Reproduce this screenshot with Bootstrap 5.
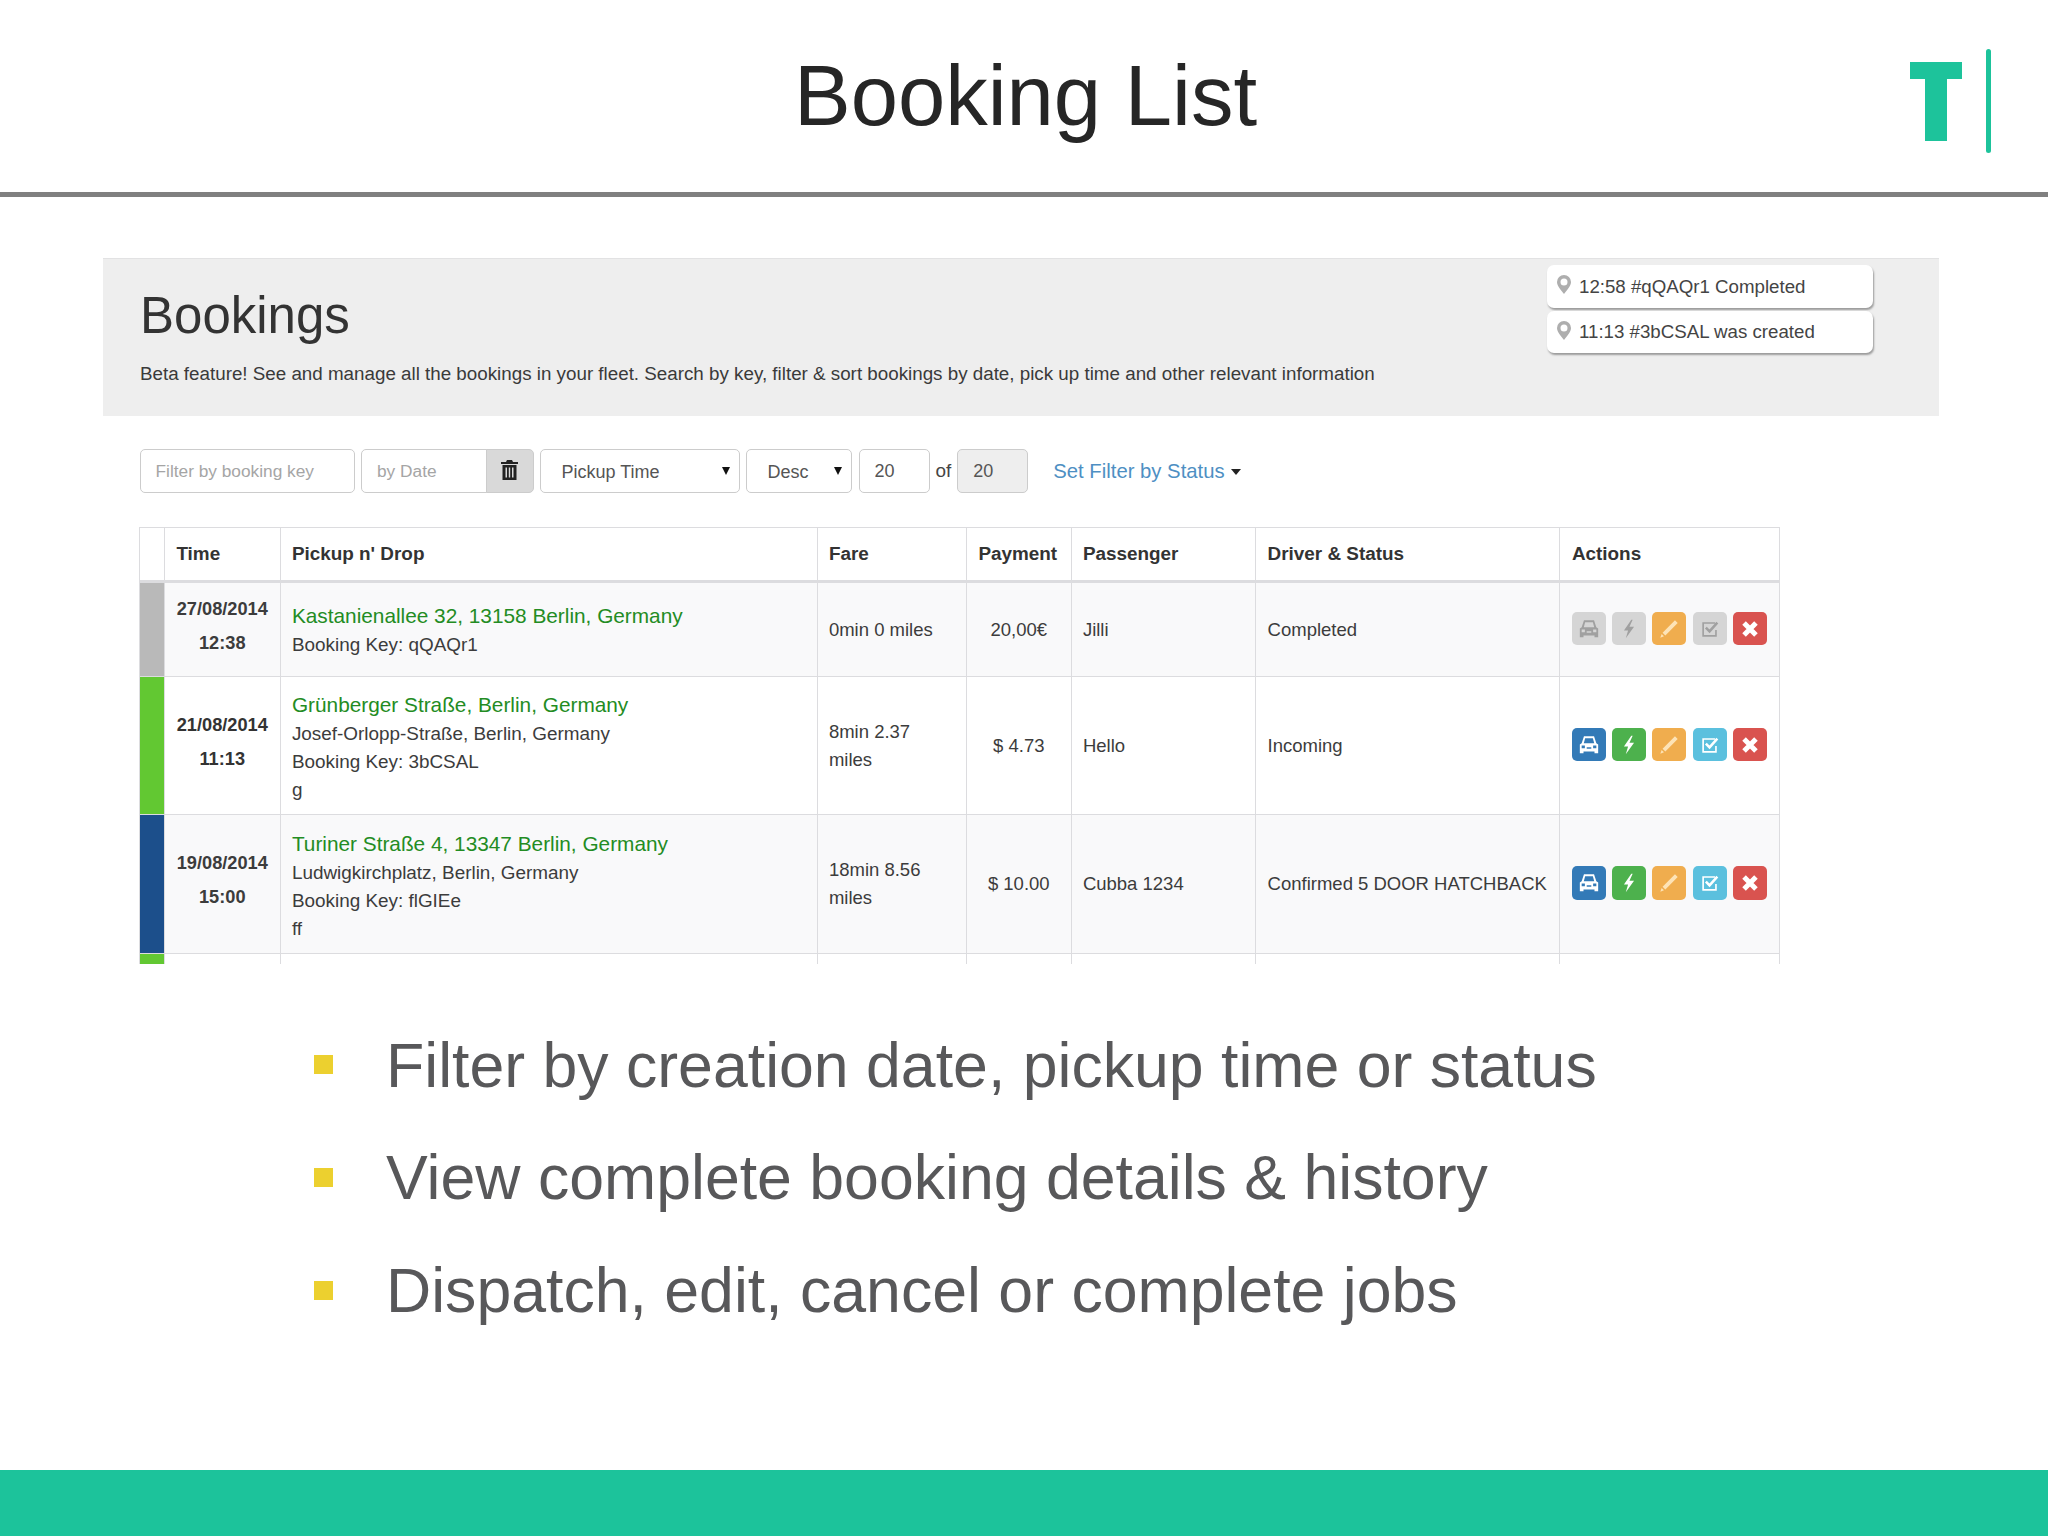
<!DOCTYPE html>
<html lang="en">
<head>
<meta charset="utf-8">
<title>Booking List</title>
<link href="https://cdn.jsdelivr.net/npm/bootstrap@5.3.0/dist/css/bootstrap.min.css" rel="stylesheet">
<style>
html,body{margin:0;background:#fff}
body{font-family:"Liberation Sans",Arial,sans-serif;color:#333}
.slide{width:2048px;height:1536px;display:flex;flex-direction:column;overflow:hidden;background:#fff}
.slide-head{height:192px;display:grid;grid-template-columns:1fr auto 1fr;align-items:center}
.slide-title{grid-column:2;margin:0 0 2px 3px;font-size:85px;line-height:1;font-weight:400;color:#262626;font-family:"Liberation Sans",sans-serif}
.logo{grid-column:3;justify-self:end;margin:0 57px 0 0;width:81px;height:104px;align-self:start;margin-top:49px;color:#1dc39b}
.rule{height:5px;background:#808080;flex:none}
.shot{margin:61px 0 0 103px;width:1836px;flex:none}
.band{height:158px;background:#eee;box-shadow:inset 0 1px 0 #e2e2e3;display:flex;justify-content:space-between;padding:7px 66px 0 37px}
.band-title{margin:20px 0 0;font-size:51px;line-height:1.2;font-weight:400;color:#333;font-family:"Liberation Sans",sans-serif}
.band-sub{margin:15px 0 0;font-size:18.8px;line-height:26px;color:#3a3a3a}
.notes{width:326px;display:flex;flex-direction:column;gap:3px}
.note{height:42.5px;background:#fff;border-radius:7px;box-shadow:1px 2px 2px rgba(0,0,0,.35);display:flex;align-items:center;gap:8px;padding:1px 0 0 10px;font-size:18.7px;color:#444;white-space:nowrap}
.note svg{width:14px;height:19px;color:#aeaeae;flex:none;margin-top:-4px}
.filters{margin:33px 0 0 36.5px;height:44px;gap:6px}
.filters .form-control,.filters .form-select,.filters .input-group-text{height:44px;min-height:44px;font-size:18px;border-color:#ccc;border-radius:5px;color:#555;padding:0 15px}
.filters .form-control::placeholder{color:#a5a5a5;font-size:17.3px}
.f-key{width:215.5px;flex:none}
.f-date{width:172.5px;flex:none}
.f-date .form-control{flex:1 1 auto;min-width:0}
.filters .f-date .input-group-text{width:47.5px;justify-content:center;padding:0;background:#d9d9d9;color:#222}
.f-date svg{width:17px;height:20px;margin-top:-3px}
.filters .form-select{flex:none;padding:2px 20px 0 21px;background-image:url("data:image/svg+xml,%3Csvg xmlns='http://www.w3.org/2000/svg' viewBox='0 0 10 10'%3E%3Cpath d='M1 1h8L5 9z' fill='%23111'/%3E%3C/svg%3E");background-size:10px 10px;background-position:right 8px center}
.f-sort{width:200px}
.f-dir{width:106px}
.f-num{width:71px;flex:none}
.filters .f-next{margin-left:1px}
.filters .form-control:disabled{background:#eee}
.f-of{font-size:18.9px;color:#444;margin:0}
.f-link{margin-left:19px;font-size:20.3px;color:#4e8fc3;text-decoration:none;display:flex;align-items:center;gap:6px;padding-top:1px}
.f-caret{width:0;height:0;border:5.5px solid transparent;border-top:6px solid #222;border-bottom:0}
.table-clip{margin:34px 0 0 36px;width:1641px;height:437px;overflow:hidden}
.grid-tbl{table-layout:fixed;width:1641px;margin:0;font-size:18.5px;--bs-table-striped-bg:#f9f9fa;--bs-table-border-color:#dcdcdf;--bs-table-color:#3c3c3c;--bs-table-striped-color:#3c3c3c;color:#3c3c3c;border-color:#dcdcdf}
.grid-tbl th,.grid-tbl td{padding:0 11.4px;vertical-align:middle}
.grid-tbl thead th{height:54px;font-size:18.9px;font-weight:700;color:#333;border-bottom-width:3px;background:#fff}
.grid-tbl .row-a{height:95px}
.grid-tbl .row-b{height:138px}
.grid-tbl .row-c{height:139px}
.grid-tbl .row-d{height:100px}
.grid-tbl td.cell-bar{padding:0;box-shadow:none}
.grid-tbl td.bar-grey{background:#b9b9b9}
.grid-tbl td.bar-green{background:#62c832}
.grid-tbl td.bar-navy{background:#1c4f8b}
.grid-tbl td.cell-time{font-size:18.2px;font-weight:700;line-height:34px;text-align:center;color:#333;padding-bottom:8px}
.cell-pay{text-align:center}
.cell-driver{white-space:nowrap}
.grid-tbl td.cell-route{line-height:28px;font-size:18.9px}
.grid-tbl .row-b td.cell-route,.grid-tbl .row-c td.cell-route{padding-top:2px}
.route-main{display:block;font-size:20.8px;line-height:31px;color:#238c23}
.acts{display:flex;gap:6.3px;margin-bottom:2px}
.acts .btn{width:34px;height:33.5px;padding:0;border-radius:5px;border:0;display:flex;align-items:center;justify-content:center;color:#fff}
.acts svg{width:22px;height:22px}
.a-blue{background:#337ab7}
.a-green{background:#4db14d}
.a-amber{background:#f0ad4e}
.a-sky{background:#5bc0de}
.a-red{background:#d9534f}
.acts .a-off{background:#d5d5d5;color:#a0a0a0}
.acts .a-amber svg{color:#fde3b6}
.bullets{margin:44.5px 0 0 314px;padding:0}
.bullets li{display:flex;align-items:center;gap:53px;height:112.7px;font-size:62.6px;line-height:1;color:#58585a;font-family:"Liberation Sans",sans-serif;white-space:nowrap}
.sq{width:19px;height:19px;background:#ecd02f;flex:none}
.foot{margin-top:auto;height:66px;background:#1cc39b;flex:none}
</style>
</head>
<body>
<svg width="0" height="0" class="d-none" aria-hidden="true">
  <symbol id="i-car" viewBox="0 0 24 24"><path fill="currentColor" fill-rule="evenodd" d="M6.5 2.500h11L20 10l2 1.500V21h-4v-2H6v2H2v-9.500L4 10zM7.800 4.500 6.300 10h11.400l-1.500-5.500zM4 12.500V15.500h3.500v-3zM16.500 12.500V15.500H20v-3zM9.500 14.500v1.500h5v-1.500z"/></symbol>
  <symbol id="i-bolt" viewBox="0 0 24 24"><path fill="currentColor" d="M14.500 2 6.500 13.500h4.500L8.500 22l9-12.500h-5L16 2z"/></symbol>
  <symbol id="i-pen" viewBox="0 0 24 24"><path fill="currentColor" d="M18.500 2.500 21.500 5.500 8 19 5 16zM4 17.500 6.500 20 2.500 21.500z"/></symbol>
  <symbol id="i-check" viewBox="0 0 24 24"><path fill="none" stroke="currentColor" stroke-width="1.800" d="M18.500 13v6.500h-14v-14h13"/><path fill="none" stroke="currentColor" stroke-width="2.800" d="M7.500 10.500 11.500 14.500 20 5"/></symbol>
  <symbol id="i-x" viewBox="0 0 24 24"><path fill="none" stroke="currentColor" stroke-width="5.500" d="M5.500 5.500 18.500 18.500M18.500 5.500 5.500 18.500"/></symbol>
  <symbol id="i-pin" viewBox="0 0 14 19"><path fill="currentColor" fill-rule="evenodd" d="M7 0a7 7 0 0 1 7 7c0 4-4 8-7 12C4 15 0 11 0 7a7 7 0 0 1 7-7zm0 3.500a3.500 3.500 0 1 0 0 7 3.500 3.500 0 0 0 0-7z"/></symbol>
</svg>
<div class="slide">
  <header class="slide-head">
    <h1 class="slide-title">Booking List</h1>
    <svg class="logo" viewBox="0 0 81 104" aria-label="T logo"><path fill="currentColor" d="M0 13h52v17H37v62H15V30H0z"/><rect x="76" y="0" width="5" height="104" rx="2.500" fill="currentColor"/></svg>
  </header>
  <div class="rule"></div>
  <section class="shot">
    <div class="band">
      <div>
        <h2 class="band-title">Bookings</h2>
        <p class="band-sub">Beta feature! See and manage all the bookings in your fleet. Search by key, filter &amp; sort bookings by date, pick up time and other relevant information</p>
      </div>
      <div class="notes">
        <div class="note"><svg><use href="#i-pin"/></svg>12:58 #qQAQr1 Completed</div>
        <div class="note"><svg><use href="#i-pin"/></svg>11:13 #3bCSAL was created</div>
      </div>
    </div>
    <div class="filters d-flex align-items-center">
      <input class="form-control f-key" type="text" placeholder="Filter by booking key">
      <div class="input-group f-date">
        <input class="form-control" type="text" placeholder="by Date">
        <span class="input-group-text"><svg viewBox="0 0 17 20"><path fill="currentColor" fill-rule="evenodd" d="M6 0h5l1 2h5v2H0V2h5zM1.500 5h14v15h-14zM4.500 7.500v10H6v-10zM7.800 7.500v10h1.400v-10zM11 7.500v10h1.500v-10z"/></svg></span>
      </div>
      <select class="form-select f-sort"><option>Pickup Time</option></select>
      <select class="form-select f-dir"><option>Desc</option></select>
      <input class="form-control f-num f-next" type="text" value="20">
      <span class="f-of">of</span>
      <input class="form-control f-num" type="text" value="20" disabled>
      <a class="f-link" href="#">Set Filter by Status <span class="f-caret"></span></a>
    </div>
    <div class="table-clip">
      <table class="table table-bordered table-striped grid-tbl">
        <colgroup><col style="width:25px"><col style="width:115.500px"><col style="width:537px"><col style="width:149.500px"><col style="width:104.500px"><col style="width:184.700px"><col style="width:304.300px"><col style="width:220px"></colgroup>
        <thead><tr><th></th><th>Time</th><th>Pickup n' Drop</th><th>Fare</th><th>Payment</th><th>Passenger</th><th>Driver &amp; Status</th><th>Actions</th></tr></thead>
        <tbody>
          <tr class="row-a">
            <td class="cell-bar bar-grey"></td>
            <td class="cell-time">27/08/2014<br>12:38</td>
            <td class="cell-route"><span class="route-main">Kastanienallee 32, 13158 Berlin, Germany</span>Booking Key: qQAQr1</td>
            <td>0min 0 miles</td><td class="cell-pay">20,00€</td><td>Jilli</td><td class="cell-driver">Completed</td>
            <td><div class="acts">
              <button class="btn a-off" type="button"><svg><use href="#i-car"/></svg></button>
              <button class="btn a-off" type="button"><svg><use href="#i-bolt"/></svg></button>
              <button class="btn a-amber" type="button"><svg><use href="#i-pen"/></svg></button>
              <button class="btn a-off" type="button"><svg><use href="#i-check"/></svg></button>
              <button class="btn a-red" type="button"><svg><use href="#i-x"/></svg></button>
            </div></td>
          </tr>
          <tr class="row-b">
            <td class="cell-bar bar-green"></td>
            <td class="cell-time">21/08/2014<br>11:13</td>
            <td class="cell-route"><span class="route-main">Grünberger Straße, Berlin, Germany</span>Josef-Orlopp-Straße, Berlin, Germany<br>Booking Key: 3bCSAL<br>g</td>
            <td>8min 2.37<br>miles</td><td class="cell-pay">$ 4.73</td><td>Hello</td><td class="cell-driver">Incoming</td>
            <td><div class="acts">
              <button class="btn a-blue" type="button"><svg><use href="#i-car"/></svg></button>
              <button class="btn a-green" type="button"><svg><use href="#i-bolt"/></svg></button>
              <button class="btn a-amber" type="button"><svg><use href="#i-pen"/></svg></button>
              <button class="btn a-sky" type="button"><svg><use href="#i-check"/></svg></button>
              <button class="btn a-red" type="button"><svg><use href="#i-x"/></svg></button>
            </div></td>
          </tr>
          <tr class="row-c">
            <td class="cell-bar bar-navy"></td>
            <td class="cell-time">19/08/2014<br>15:00</td>
            <td class="cell-route"><span class="route-main">Turiner Straße 4, 13347 Berlin, Germany</span>Ludwigkirchplatz, Berlin, Germany<br>Booking Key: flGIEe<br>ff</td>
            <td>18min 8.56<br>miles</td><td class="cell-pay">$ 10.00</td><td>Cubba 1234</td><td class="cell-driver">Confirmed 5 DOOR HATCHBACK</td>
            <td><div class="acts">
              <button class="btn a-blue" type="button"><svg><use href="#i-car"/></svg></button>
              <button class="btn a-green" type="button"><svg><use href="#i-bolt"/></svg></button>
              <button class="btn a-amber" type="button"><svg><use href="#i-pen"/></svg></button>
              <button class="btn a-sky" type="button"><svg><use href="#i-check"/></svg></button>
              <button class="btn a-red" type="button"><svg><use href="#i-x"/></svg></button>
            </div></td>
          </tr>
          <tr class="row-d"><td class="cell-bar bar-green"></td><td></td><td></td><td></td><td></td><td></td><td></td><td></td></tr>
        </tbody>
      </table>
    </div>
  </section>
  <ul class="bullets list-unstyled">
    <li><span class="sq"></span>Filter by creation date, pickup time or status</li>
    <li><span class="sq"></span>View complete booking details &amp; history</li>
    <li><span class="sq"></span>Dispatch, edit, cancel or complete jobs</li>
  </ul>
  <div class="foot"></div>
</div>
<script src="https://cdn.jsdelivr.net/npm/bootstrap@5.3.0/dist/js/bootstrap.bundle.min.js"></script>
</body>
</html>
